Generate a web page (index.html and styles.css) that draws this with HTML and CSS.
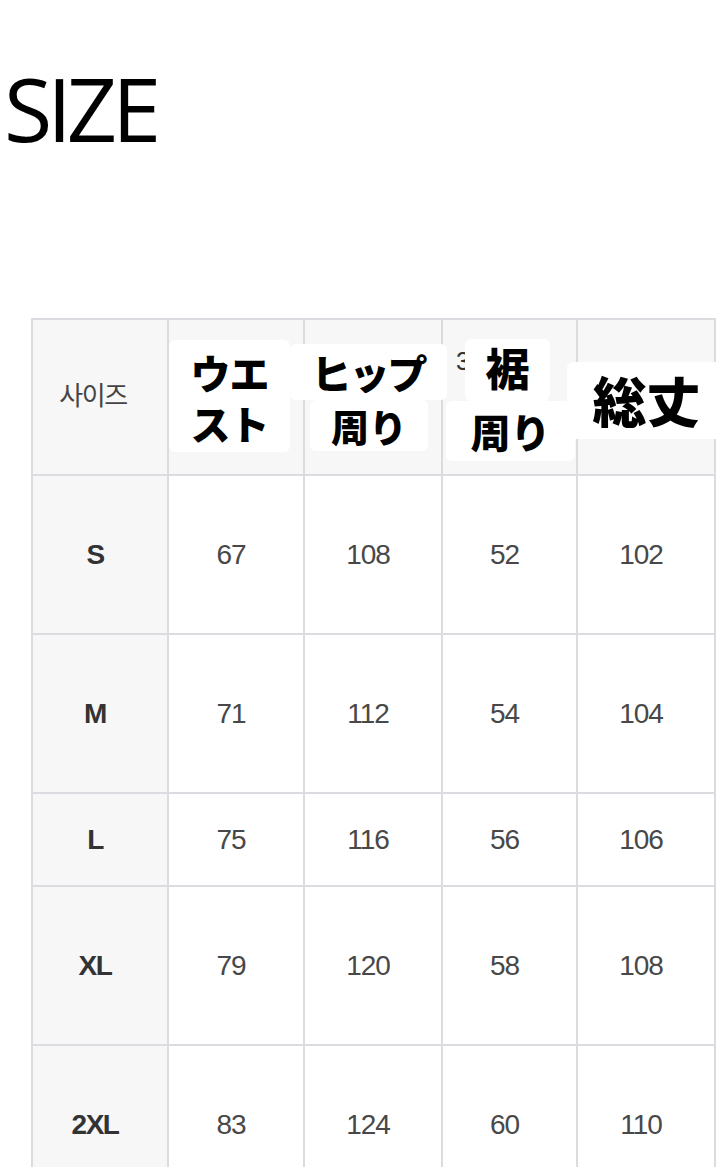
FILE: index.html
```html
<!DOCTYPE html>
<html lang="ja">
<head>
<meta charset="utf-8">
<title>SIZE</title>
<link rel="stylesheet" href="styles.css">
</head>
<body>
<h1 class="title">SIZE</h1>
<div class="chart">
  <table class="size-table">
    <colgroup>
      <col class="c1"><col class="c2"><col class="c3"><col class="c4"><col class="c5">
    </colgroup>
    <tr class="head">
      <th class="label-cell">사이즈</th>
      <th></th>
      <th></th>
      <th class="hem-cell"><span class="remnant">3</span></th>
      <th></th>
    </tr>
    <tr class="r-tall"><td class="size">S</td><td>67</td><td>108</td><td>52</td><td>102</td></tr>
    <tr class="r-tall"><td class="size">M</td><td>71</td><td>112</td><td>54</td><td>104</td></tr>
    <tr class="r-short"><td class="size">L</td><td>75</td><td>116</td><td>56</td><td>106</td></tr>
    <tr class="r-tall"><td class="size">XL</td><td>79</td><td>120</td><td>58</td><td>108</td></tr>
    <tr class="r-tall"><td class="size">2XL</td><td>83</td><td>124</td><td>60</td><td>110</td></tr>
  </table>

  <div class="patch p-waist1">ウエ</div>
  <div class="patch p-waist2">スト</div>
  <div class="patch p-hip1">ヒップ</div>
  <div class="patch p-hip2">周り</div>
  <div class="patch p-hem1">裾</div>
  <div class="patch p-hem2">周り</div>
  <div class="patch p-length">総丈</div>
</div>
</body>
</html>
```

FILE: styles.css
```css
html, body {
  margin: 0;
  padding: 0;
  background: #ffffff;
}

body {
  font-family: "Liberation Sans", Arial, sans-serif;
  color: #444;
}

.title {
  margin: 0;
  padding: 58px 0 0 4px;
  font-family: "Open Sans", "Noto Sans", sans-serif;
  font-weight: 400;
  font-size: 88px;
  line-height: 100px;
  letter-spacing: -5px;
  color: #000;
  height: 318px;
  box-sizing: border-box;
}

.chart {
  position: relative;
}

.size-table {
  margin-left: 31px;
  border-collapse: collapse;
  table-layout: fixed;
  width: 685px;
}

.c1 { width: 136px; }
.c2 { width: 136px; }
.c3 { width: 138px; }
.c4 { width: 135px; }
.c5 { width: 138px; }

.size-table th,
.size-table td {
  border: 2px solid #dcdce0;
  padding: 0 10px 0 0;
  text-align: center;
  vertical-align: middle;
  font-size: 28px;
  letter-spacing: -1px;
  color: #484848;
  font-weight: 400;
}

.size-table .head th {
  background: #f7f7f8;
  height: 154px;
}

.r-tall td { height: 157px; }
.r-short td { height: 91px; }

.size-table td.size {
  background: #f7f7f8;
  font-weight: 700;
  color: #333;
  letter-spacing: -1.5px;
}

.size-table .head th.label-cell {
  font-family: "Noto Sans CJK KR", sans-serif;
  font-size: 26px;
  letter-spacing: -1.5px;
  color: #444;
  padding: 0 14px 8px 0;
  height: 146px;
}

.size-table .head th.hem-cell {
  text-align: left;
  vertical-align: top;
  padding: 27px 0 0 13px;
  height: 127px;
  font-family: "Liberation Sans", sans-serif;
  font-size: 25px;
  color: #333;
}

.patch {
  position: absolute;
  background: #fff;
  border-radius: 6px;
  font-family: "Noto Sans CJK JP", sans-serif;
  font-weight: 900;
  color: #000;
  text-align: center;
  box-sizing: border-box;
  display: flex;
  align-items: center;
  justify-content: center;
  line-height: 1.2;
}

.p-waist1 {
  left: 169px;
  top: 22px;
  width: 121px;
  height: 58px;
  font-size: 40px;
  letter-spacing: -1px;
  border-radius: 6px 6px 0 0;
  padding-top: 6px;
}

.p-waist2 {
  left: 169px;
  top: 80px;
  width: 121px;
  height: 54px;
  font-size: 40px;
  letter-spacing: -1px;
  border-radius: 0 0 6px 6px;
  padding-bottom: 4px;
}

.p-hip1 {
  left: 290px;
  top: 26px;
  width: 157px;
  height: 56px;
  font-size: 40px;
  letter-spacing: -2px;
}

.p-hip2 {
  left: 310px;
  top: 82px;
  width: 118px;
  height: 51px;
  font-size: 38px;
}

.p-hem1 {
  left: 465px;
  top: 21px;
  width: 85px;
  height: 62px;
  font-size: 44px;
  padding-bottom: 6px;
}

.p-hem2 {
  left: 446px;
  top: 83px;
  width: 129px;
  height: 60px;
  font-size: 40px;
}

.p-length {
  left: 567px;
  top: 44px;
  width: 149px;
  height: 77px;
  font-size: 54px;
  padding-left: 10px;
  border-radius: 6px 0 0 6px;
}
```
